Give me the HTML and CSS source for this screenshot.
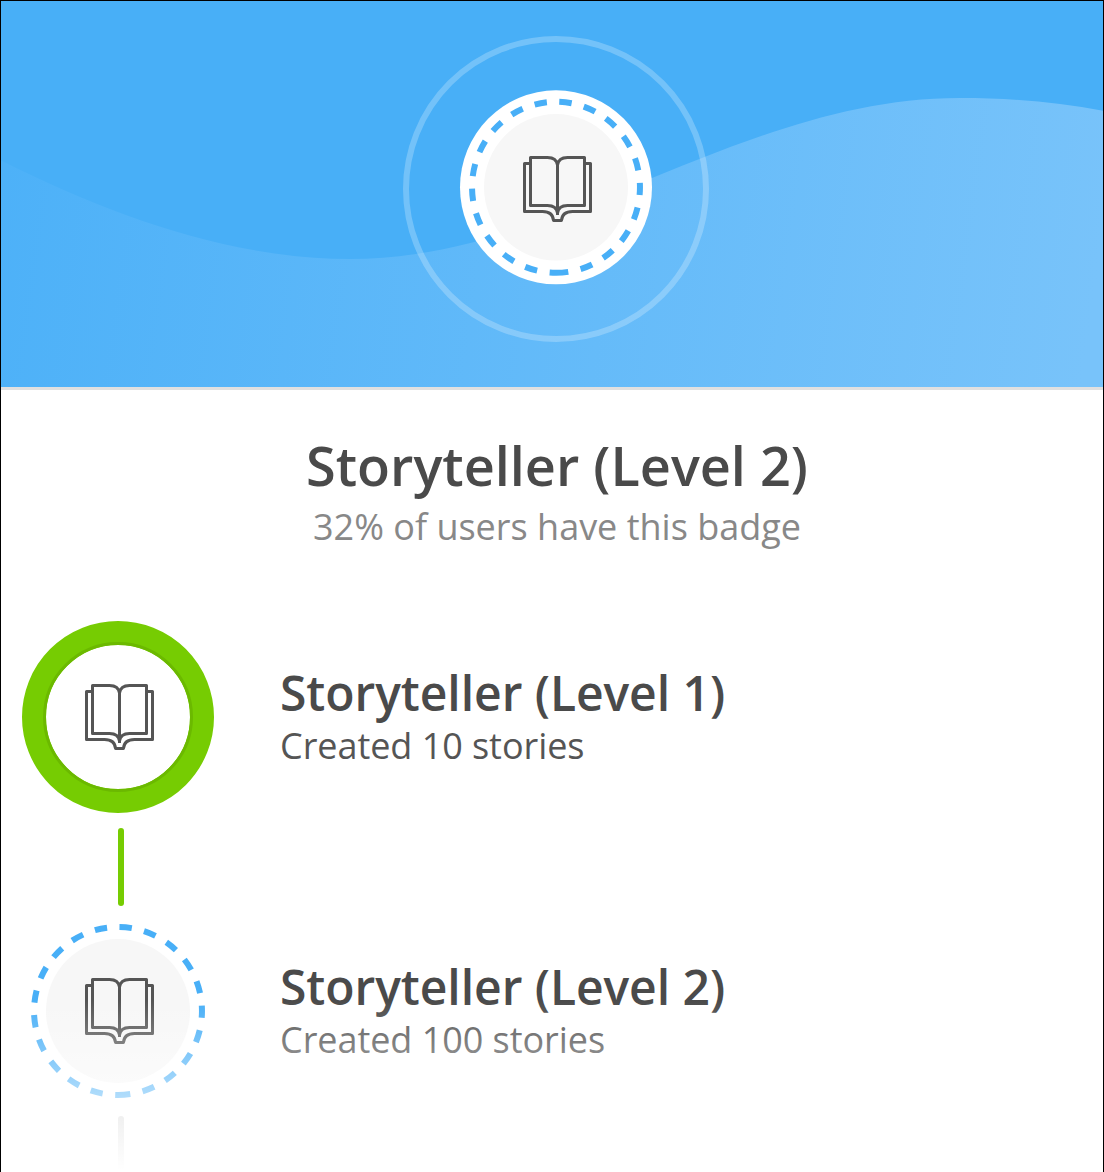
FILE: index.html
```html
<!DOCTYPE html>
<html lang="en">
<head>
<meta charset="utf-8">
<title>Storyteller badge</title>
<link rel="stylesheet" href="styles.css">
</head>
<body>
<svg class="defs" width="0" height="0" aria-hidden="true">
  <symbol id="book" viewBox="0 0 72 70">
    <g fill="none" stroke="#555" stroke-width="3" stroke-linejoin="round">
      <path d="M35.5 61V11C34.8 6 31 3.5 25.5 3.5H8.5V51.5H25.5C31 51.5 34.8 54 35.5 59C36.2 54 40 51.5 45.5 51.5H62.5V3.5H45.5C40 3.5 36.2 6 35.5 11"/>
      <path d="M8.5 9.5H2.5V57.5H20.5C27 57.5 31 60 31.5 66.5H39.5C40 60 44 57.5 50.5 57.5H68.5V9.5H62.5"/>
    </g>
  </symbol>
</svg>
<main class="screen">
  <header class="hero">
    <svg class="hero-art" viewBox="0 0 1102 386">
      <defs>
        <linearGradient id="wave" gradientUnits="userSpaceOnUse" x1="0" y1="180" x2="1090" y2="330">
          <stop offset="0" stop-color="#4db1f8"/>
          <stop offset="1" stop-color="#78c3fa"/>
        </linearGradient>
      </defs>
      <g transform="translate(-1 -1)">
        <path fill="url(#wave)" d="M0 160C110 215 230 259 350 259C560 259 740 98 960 98C1010 98 1058 102 1104 111V387H0Z"/>
        <circle cx="556" cy="189" r="150" fill="none" stroke="#fff" stroke-opacity=".24" stroke-width="6"/>
        <ellipse cx="556" cy="187.3" rx="96" ry="97" fill="#fff"/>
        <ellipse cx="556" cy="187.3" rx="72" ry="73.3" fill="#f7f7f7"/>
        <path d="M556 272.8A84 85.5 0 0 0 556 101.8A84 85.5 0 0 0 556 272.8" fill="none" stroke="#48aff7" stroke-width="6" stroke-dasharray="12.4 12.6"/>
        <use href="#book" x="522" y="154" width="72" height="70"/>
      </g>
    </svg>
  </header>
  <section class="summary">
    <h1>Storyteller (Level 2)</h1>
    <p>32% of users have this badge</p>
  </section>
  <section class="levels">
    <article class="level">
      <svg class="badge" viewBox="0 0 192 192">
        <circle cx="96" cy="96" r="84" fill="#fff" stroke="#76cc02" stroke-width="24"/>
        <circle cx="96" cy="96" r="73.5" fill="none" stroke="#6bb900" stroke-width="3"/>
        <use href="#book" x="62" y="61" width="72" height="70"/>
      </svg>
      <div class="label">
        <h2>Storyteller (Level 1)</h2>
        <p>Created 10 stories</p>
      </div>
    </article>
    <div class="connector done"></div>
    <article class="level">
      <svg class="badge" viewBox="0 0 192 192">
        <circle cx="96" cy="96" r="72" fill="#f7f7f7"/>
        <path d="M96 180A84 84 0 0 0 96 12A84 84 0 0 0 96 180" fill="none" stroke="#48aff7" stroke-width="6" stroke-dasharray="12.4 12.55"/>
        <use href="#book" x="62" y="61" width="72" height="70"/>
      </svg>
      <div class="label">
        <h2>Storyteller (Level 2)</h2>
        <p>Created 100 stories</p>
      </div>
    </article>
    <div class="connector next"></div>
  </section>
  <div class="fade"></div>
</main>
</body>
</html>
```
FILE: styles.css
```css
* { box-sizing: border-box; }

body {
  margin: 0;
  background: #fff;
  font-family: "Open Sans", sans-serif;
  color: #4a4a4a;
}

h1, h2, p { margin: 0; }

.defs { display: block; }

.screen {
  position: relative;
  height: 1172px;
  overflow: hidden;
  border: 1px solid #000;
  border-bottom: 0;
}

.hero {
  height: 389px;
  background: #48aff7;
  border-bottom: 3px solid #e0e0e0;
}

.hero-art {
  display: block;
  width: 1102px;
  height: 386px;
}

.summary {
  height: 231px;
  padding: 38px 0 0 10px;
  text-align: center;
}

.summary h1 {
  font-size: 54px;
  line-height: 74px;
  font-weight: 600;
}

.summary p {
  font-size: 36px;
  line-height: 50px;
  color: #888;
}

.levels { padding-left: 21px; }

.level {
  display: flex;
  gap: 66px;
  height: 192px;
}

.badge {
  flex: none;
  width: 192px;
  height: 192px;
}

.label { padding-top: 39px; }

.label h2 {
  font-size: 48px;
  line-height: 66px;
  font-weight: 600;
  letter-spacing: -0.05px;
}

.label p {
  font-size: 36px;
  line-height: 40px;
  letter-spacing: -0.05px;
  color: #555;
}

.connector {
  width: 6px;
  height: 78px;
  margin: 15px 0 9px 96px;
  border-radius: 3px;
  background: #d0d0d0;
}

.connector.done { background: #76cc02; }

.connector.next { margin-top: 9px; }

.fade {
  position: absolute;
  inset: 999px -1px 0;
  background: linear-gradient(rgba(255, 255, 255, 0), #fff 170px);
}
```
